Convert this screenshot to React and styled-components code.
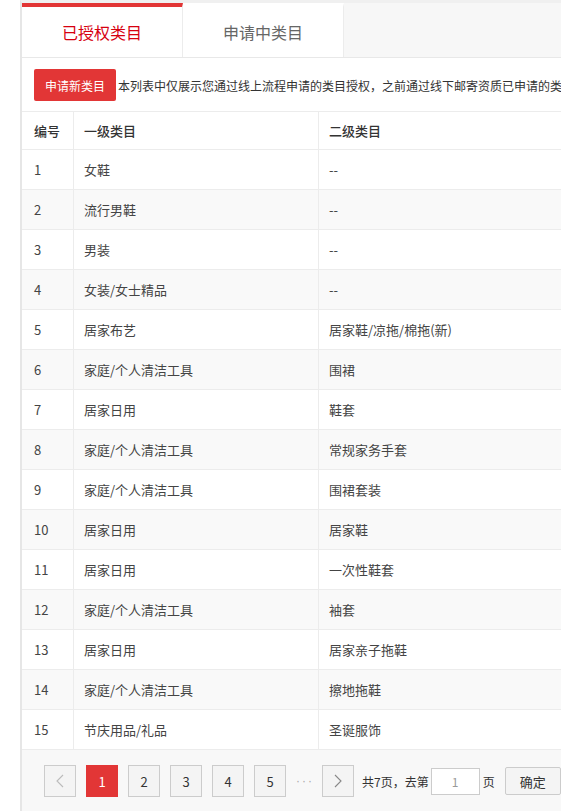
import React from "react";
import styled, { createGlobalStyle } from "styled-components";

const GlobalStyle = createGlobalStyle`
  html, body {
    margin: 0;
    padding: 0;
    background: #fff;
    overflow: hidden;
    font-family: "Noto Sans CJK SC", "Microsoft YaHei", sans-serif;
  }
  * { box-sizing: border-box; }
`;

const Wrapper = styled.div`
  margin-left: 20px;
  width: 900px;
  border-left: 2px solid #e6e6e6;
  border-top: 3px solid #f0f0f0;
  background: #fff;
`;

const TabBar = styled.div`
  display: flex;
  height: 54px;
  background: #f7f7f7;
`;

const Tab = styled.div`
  width: 161px;
  height: 54px;
  display: flex;
  align-items: center;
  justify-content: center;
  background: #fff;
  border-top: 4px solid ${(p) => (p.$active ? "#e23535" : "#fff")};
  border-right: 1px solid #ececec;
  color: ${(p) => (p.$active ? "#d6000f" : "#666")};
  font-size: 16px;
`;

const Panel = styled.div`
  border-top: 1px solid #e8e8e8;
  background: #fff;
`;

const Toolbar = styled.div`
  display: flex;
  align-items: center;
  padding: 11px 0 10px 12px;
  white-space: nowrap;
`;

const PrimaryButton = styled.button`
  width: 82px;
  height: 32px;
  border: none;
  border-radius: 2px;
  background: #e23636;
  color: #fff;
  font-family: inherit;
  font-size: 12px;
  padding: 0;
  flex-shrink: 0;
`;

const Notice = styled.span`
  margin-left: 2px;
  font-size: 12px;
  color: #333;
`;

const Row = styled.div`
  display: grid;
  grid-template-columns: 52px 245px 1fr;
  height: ${(p) => (p.$head ? "39px" : "40px")};
  border-top: ${(p) => (p.$head ? "1px solid #ececec" : "none")};
  border-bottom: 1px solid #ececec;
  background: ${(p) => (p.$striped ? "#f9f9f9" : "#fff")};
`;

const Cell = styled.div`
  display: flex;
  align-items: center;
  padding-left: ${(p) => (p.$first ? "12px" : "10px")};
  border-right: 1px solid #ececec;
  font-size: 13px;
  color: ${(p) => (p.$head ? "#333" : "#444")};
  font-weight: ${(p) => (p.$head ? 500 : 400)};
  white-space: nowrap;
`;

const Pagination = styled.div`
  display: flex;
  align-items: center;
  padding: 15px 0 40px 22px;
  background: #f8f8f8;
  white-space: nowrap;
`;

const PageButton = styled.div`
  width: 32px;
  height: 32px;
  flex-shrink: 0;
  display: flex;
  align-items: center;
  justify-content: center;
  margin-right: ${(p) => (p.$mr != null ? p.$mr : 10)}px;
  border: 1px solid ${(p) => (p.$active ? "#e23636" : "#cccccc")};
  background: ${(p) => (p.$active ? "#e23636" : "#f4f4f4")};
  color: ${(p) => (p.$active ? "#fff" : "#333")};
  font-size: 13px;
`;

const Ellipsis = styled.span`
  width: 16px;
  margin-right: 10px;
  text-align: center;
  font-family: "Liberation Sans", Arial, sans-serif;
  font-size: 12px;
  color: #aaa;
  letter-spacing: 2px;
`;

const PageInfo = styled.span`
  font-size: 12px;
  color: #333;
`;

const PageInput = styled.div`
  width: 49px;
  height: 27px;
  margin: 0 3px 0 2px;
  border: 1px solid #cccccc;
  background: #fff;
  display: flex;
  align-items: center;
  justify-content: center;
  font-size: 12px;
  color: #999;
`;

const ConfirmButton = styled.div`
  width: 56px;
  height: 28px;
  margin-left: 10px;
  flex-shrink: 0;
  display: flex;
  align-items: center;
  justify-content: center;
  border: 1px solid #cccccc;
  border-radius: 2px;
  background: #f4f4f4;
  font-size: 13px;
  color: #333;
`;

const Chevron = ({ dir, color }) => (
  <svg width="8" height="14" viewBox="0 0 8 14">
    <polyline
      points={dir === "left" ? "7,1 1,7 7,13" : "1,1 7,7 1,13"}
      fill="none"
      stroke={color}
      strokeWidth="1.1"
    />
  </svg>
);

const rows = [
  ["女鞋", "--"],
  ["流行男鞋", "--"],
  ["男装", "--"],
  ["女装/女士精品", "--"],
  ["居家布艺", "居家鞋/凉拖/棉拖(新)"],
  ["家庭/个人清洁工具", "围裙"],
  ["居家日用", "鞋套"],
  ["家庭/个人清洁工具", "常规家务手套"],
  ["家庭/个人清洁工具", "围裙套装"],
  ["居家日用", "居家鞋"],
  ["居家日用", "一次性鞋套"],
  ["家庭/个人清洁工具", "袖套"],
  ["居家日用", "居家亲子拖鞋"],
  ["家庭/个人清洁工具", "擦地拖鞋"],
  ["节庆用品/礼品", "圣诞服饰"],
];

export default function App() {
  return (
    <>
      <GlobalStyle />
      <Wrapper>
        <TabBar>
          <Tab $active>已授权类目</Tab>
          <Tab>申请中类目</Tab>
        </TabBar>
        <Panel>
          <Toolbar>
            <PrimaryButton>申请新类目</PrimaryButton>
            <Notice>
              本列表中仅展示您通过线上流程申请的类目授权，之前通过线下邮寄资质已申请的类目授权不在此列表中展示
            </Notice>
          </Toolbar>
          <Row $head>
            <Cell $head $first>编号</Cell>
            <Cell $head>一级类目</Cell>
            <Cell $head>二级类目</Cell>
          </Row>
          {rows.map(([a, b], i) => (
            <Row key={i} $striped={i % 2 === 1}>
              <Cell $first>{i + 1}</Cell>
              <Cell>{a}</Cell>
              <Cell>{b}</Cell>
            </Row>
          ))}
          <Pagination>
            <PageButton>
              <Chevron dir="left" color="#bbbbbb" />
            </PageButton>
            <PageButton $active>1</PageButton>
            <PageButton>2</PageButton>
            <PageButton>3</PageButton>
            <PageButton>4</PageButton>
            <PageButton>5</PageButton>
            <Ellipsis>···</Ellipsis>
            <PageButton $mr={8}>
              <Chevron dir="right" color="#888888" />
            </PageButton>
            <PageInfo>共7页，去第</PageInfo>
            <PageInput>1</PageInput>
            <PageInfo>页</PageInfo>
            <ConfirmButton>确定</ConfirmButton>
          </Pagination>
        </Panel>
      </Wrapper>
    </>
  );
}
